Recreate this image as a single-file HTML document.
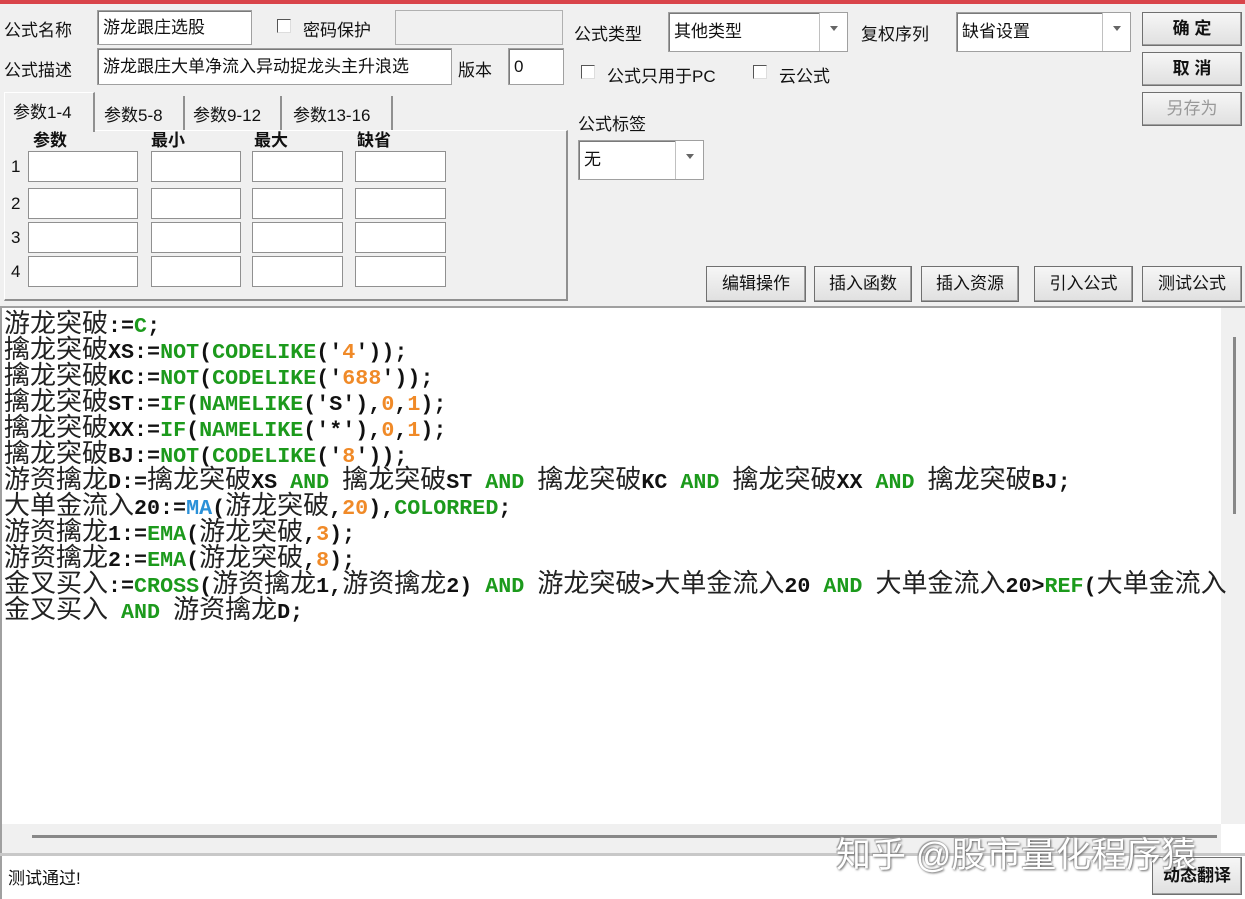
<!DOCTYPE html>
<html><head><meta charset="utf-8">
<style>
*{margin:0;padding:0;box-sizing:border-box}
body{width:1245px;height:899px;background:#f0f0f0;position:relative;overflow:hidden;font-family:"Liberation Sans","Microsoft YaHei","Noto Sans CJK SC",sans-serif;font-size:17px;color:#111}
.a{position:absolute}
.inp{position:absolute;background:#fff;border:1px solid #a0a0a0;box-shadow:inset 1px 1px 0 #7a7a7a;padding-left:5px;line-height:30px;white-space:nowrap;overflow:hidden}
.lbl{position:absolute;white-space:nowrap}
.btn{position:absolute;background:linear-gradient(#f6f6f6,#e0e0e0);border:1px solid #707070;box-shadow:inset -1px -1px 0 #a0a0a0;text-align:center;white-space:nowrap}
.cb{position:absolute;width:14px;height:14px;border:1px solid #555;border-right-color:#ddd;border-bottom-color:#ddd;background:#fff}
.dd{position:absolute;right:0;top:0;bottom:0;width:28px;border-left:1px solid #c0c0c0;background:#fff}
.dd:after{content:"";position:absolute;left:10px;top:13px;border:4px solid transparent;border-top:5px solid #666}
.pi{position:absolute;background:#fff;border:1px solid #909090;width:0;height:31px}
#code{position:absolute;left:4px;top:309px;font-family:"Liberation Mono",monospace;font-weight:bold;font-size:21.7px;color:#111}
#code div{height:26px;line-height:26px;white-space:pre;overflow:visible}
#code span{line-height:26px}
.c{font-family:"WenQuanYi Zen Hei","Noto Sans CJK SC",sans-serif;font-weight:normal;font-size:26px;color:#222}
.g{color:#1c9a1c}.o{color:#f08a28}.b{color:#2a90d8}
</style></head><body>
<div class="a" style="left:0;top:0;width:1245px;height:4px;background:#d9444a"></div>

<div class="lbl" style="left:4px;top:16px">公式名称</div>
<div class="inp" style="left:97px;top:10px;width:155px;height:35px;line-height:33px">游龙跟庄选股</div>
<div class="cb" style="left:277px;top:19px"></div>
<div class="lbl" style="left:303px;top:16px">密码保护</div>
<div class="a" style="left:395px;top:10px;width:168px;height:35px;border:1px solid #b0b0b0;background:#f0f0f0"></div>

<div class="lbl" style="left:4px;top:56px">公式描述</div>
<div class="inp" style="left:97px;top:48px;width:355px;height:37px;line-height:35px">游龙跟庄大单净流入异动捉龙头主升浪选</div>
<div class="lbl" style="left:458px;top:56px">版本</div>
<div class="inp" style="left:508px;top:48px;width:56px;height:37px;line-height:35px">0</div>

<div class="lbl" style="left:574px;top:20px">公式类型</div>
<div class="inp" style="left:668px;top:12px;width:180px;height:40px;line-height:38px">其他类型<div class="dd"></div></div>
<div class="lbl" style="left:861px;top:20px">复权序列</div>
<div class="inp" style="left:956px;top:12px;width:175px;height:40px;line-height:38px">缺省设置<div class="dd"></div></div>
<div class="cb" style="left:581px;top:65px"></div>
<div class="lbl" style="left:607px;top:62px">公式只用于PC</div>
<div class="cb" style="left:753px;top:65px"></div>
<div class="lbl" style="left:779px;top:62px">云公式</div>
<div class="lbl" style="left:578px;top:110px">公式标签</div>
<div class="inp" style="left:578px;top:140px;width:126px;height:40px;line-height:38px">无<div class="dd"></div></div>

<div class="btn" style="left:1142px;top:12px;width:100px;height:34px;line-height:32px;font-weight:bold">确 定</div>
<div class="btn" style="left:1142px;top:52px;width:100px;height:34px;line-height:32px;font-weight:bold">取 消</div>
<div class="btn" style="left:1142px;top:92px;width:100px;height:34px;line-height:32px;color:#999">另存为</div>

<div class="btn" style="left:706px;top:266px;width:100px;height:36px;line-height:34px">编辑操作</div>
<div class="btn" style="left:814px;top:266px;width:98px;height:36px;line-height:34px">插入函数</div>
<div class="btn" style="left:921px;top:266px;width:98px;height:36px;line-height:34px">插入资源</div>
<div class="btn" style="left:1034px;top:266px;width:99px;height:36px;line-height:34px">引入公式</div>
<div class="btn" style="left:1142px;top:266px;width:100px;height:36px;line-height:34px">测试公式</div>

<!-- tabs -->
<div class="a" style="left:4px;top:130px;width:564px;height:171px;border-right:2px solid #909090;border-bottom:2px solid #909090;border-left:1px solid #fff;border-top:1px solid #fff"></div>
<div class="a" style="left:4px;top:92px;width:91px;height:40px;border-right:2px solid #909090;border-left:1px solid #fff;border-top:1px solid #fff;background:#f0f0f0"></div>
<div class="lbl" style="left:13px;top:98px">参数1-4</div>
<div class="a" style="left:95px;top:96px;width:90px;height:34px;border-right:2px solid #909090"></div>
<div class="lbl" style="left:104px;top:101px">参数5-8</div>
<div class="a" style="left:185px;top:96px;width:97px;height:34px;border-right:2px solid #909090"></div>
<div class="lbl" style="left:193px;top:101px">参数9-12</div>
<div class="a" style="left:282px;top:96px;width:111px;height:34px;border-right:2px solid #909090"></div>
<div class="lbl" style="left:293px;top:101px">参数13-16</div>
<div class="lbl" style="left:33px;top:126px;font-weight:bold">参数</div>
<div class="lbl" style="left:151px;top:126px;font-weight:bold">最小</div>
<div class="lbl" style="left:254px;top:126px;font-weight:bold">最大</div>
<div class="lbl" style="left:357px;top:126px;font-weight:bold">缺省</div>
<div class="lbl" style="left:11px;top:157px">1</div>
<div class="lbl" style="left:11px;top:194px">2</div>
<div class="lbl" style="left:11px;top:228px">3</div>
<div class="lbl" style="left:11px;top:262px">4</div>
<div class="pi" style="left:28px;top:151px;width:110px"></div><div class="pi" style="left:151px;top:151px;width:90px"></div><div class="pi" style="left:252px;top:151px;width:91px"></div><div class="pi" style="left:355px;top:151px;width:91px"></div>
<div class="pi" style="left:28px;top:188px;width:110px"></div><div class="pi" style="left:151px;top:188px;width:90px"></div><div class="pi" style="left:252px;top:188px;width:91px"></div><div class="pi" style="left:355px;top:188px;width:91px"></div>
<div class="pi" style="left:28px;top:222px;width:110px"></div><div class="pi" style="left:151px;top:222px;width:90px"></div><div class="pi" style="left:252px;top:222px;width:91px"></div><div class="pi" style="left:355px;top:222px;width:91px"></div>
<div class="pi" style="left:28px;top:256px;width:110px"></div><div class="pi" style="left:151px;top:256px;width:90px"></div><div class="pi" style="left:252px;top:256px;width:91px"></div><div class="pi" style="left:355px;top:256px;width:91px"></div>

<!-- editor -->
<div class="a" style="left:0;top:306px;width:1245px;height:549px;background:#fff;border-top:2px solid #a0a0a0;border-left:2px solid #a0a0a0"></div>
<div class="a" style="left:1221px;top:308px;width:24px;height:516px;background:#f0f0f0"></div>
<div class="a" style="left:1233px;top:337px;width:3px;height:177px;background:#888"></div>
<div class="a" style="left:2px;top:824px;width:1219px;height:29px;background:#f0f0f0"></div>
<div class="a" style="left:32px;top:835px;width:1185px;height:3px;background:#888"></div>
<div class="a" style="left:0;top:853px;width:1245px;height:3px;background:#c8c8c8"></div>

<div id="code">
<div><span class="c">游龙突破</span>:=<span class="g">C</span>;</div>
<div><span class="c">擒龙突破</span>XS:=<span class="g">NOT</span>(<span class="g">CODELIKE</span>('<span class="o">4</span>'));</div>
<div><span class="c">擒龙突破</span>KC:=<span class="g">NOT</span>(<span class="g">CODELIKE</span>('<span class="o">688</span>'));</div>
<div><span class="c">擒龙突破</span>ST:=<span class="g">IF</span>(<span class="g">NAMELIKE</span>('S'),<span class="o">0</span>,<span class="o">1</span>);</div>
<div><span class="c">擒龙突破</span>XX:=<span class="g">IF</span>(<span class="g">NAMELIKE</span>('*'),<span class="o">0</span>,<span class="o">1</span>);</div>
<div><span class="c">擒龙突破</span>BJ:=<span class="g">NOT</span>(<span class="g">CODELIKE</span>('<span class="o">8</span>'));</div>
<div><span class="c">游资擒龙</span>D:=<span class="c">擒龙突破</span>XS <span class="g">AND</span> <span class="c">擒龙突破</span>ST <span class="g">AND</span> <span class="c">擒龙突破</span>KC <span class="g">AND</span> <span class="c">擒龙突破</span>XX <span class="g">AND</span> <span class="c">擒龙突破</span>BJ;</div>
<div><span class="c">大单金流入</span>20:=<span class="b">MA</span>(<span class="c">游龙突破</span>,<span class="o">20</span>),<span class="g">COLORRED</span>;</div>
<div><span class="c">游资擒龙</span>1:=<span class="g">EMA</span>(<span class="c">游龙突破</span>,<span class="o">3</span>);</div>
<div><span class="c">游资擒龙</span>2:=<span class="g">EMA</span>(<span class="c">游龙突破</span>,<span class="o">8</span>);</div>
<div><span class="c">金叉买入</span>:=<span class="g">CROSS</span>(<span class="c">游资擒龙</span>1,<span class="c">游资擒龙</span>2) <span class="g">AND</span> <span class="c">游龙突破</span>&gt;<span class="c">大单金流入</span>20 <span class="g">AND</span> <span class="c">大单金流入</span>20&gt;<span class="g">REF</span>(<span class="c">大单金流入</span></div>
<div><span class="c">金叉买入</span> <span class="g">AND</span> <span class="c">游资擒龙</span>D;</div>
</div>

<div class="a" style="left:0;top:856px;width:1245px;height:43px;background:#fff;border-left:2px solid #a0a0a0"></div>
<div class="lbl" style="left:8px;top:864px">测试通过!</div>
<div class="btn" style="left:1152px;top:857px;width:90px;height:38px;line-height:36px;font-weight:bold">动态翻译</div>
<div class="lbl" style="left:836px;top:827px;font-size:35px;color:#fff;text-shadow:1px 1px 2px #666,-1px -1px 1px #999">知乎 @股市量化程序猿</div>
</body></html>
